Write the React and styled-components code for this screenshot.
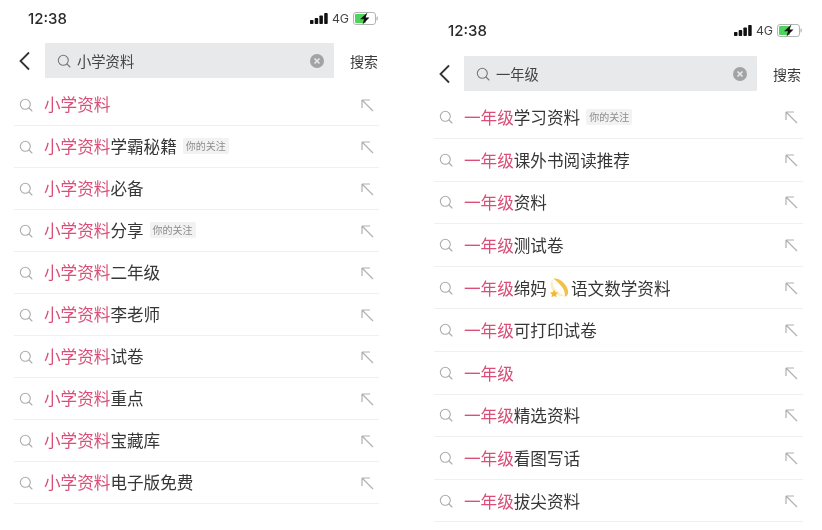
import React from "react";
import styled, { createGlobalStyle } from "styled-components";

const GlobalStyle = createGlobalStyle`
  html, body {
    margin: 0;
    padding: 0;
    background: #fff;
  }
`;

const Page = styled.div`
  box-sizing: border-box;
  width: 822px;
  height: 530px;
  padding: 0 19px 0 14px;
  display: flex;
  justify-content: space-between;
  overflow: hidden;
  background: #fff;
  font-family: "Noto Sans CJK SC", "Liberation Sans", sans-serif;
  filter: blur(0.45px);
`;

const Panel = styled.div`
  width: ${props => props.$width}px;
  padding-top: ${props => props.$top}px;
`;

const StatusBar = styled.div`
  height: 20px;
  padding: 0 1px 0 14px;
  display: flex;
  align-items: center;
  justify-content: space-between;
`;

const Time = styled.div`
  font-family: Inter, "Liberation Sans", sans-serif;
  font-size: 15px;
  font-weight: 500;
  color: #2a2a2a;
`;

const StatusIcons = styled.div`
  display: flex;
  align-items: center;
  gap: 4px;
`;

const Network = styled.span`
  font-family: Inter, "Liberation Sans", sans-serif;
  font-size: 12.3px;
  color: #444;
`;

const SearchRow = styled.div`
  margin-top: ${props => props.$gap}px;
  padding-right: ${props => props.$trail}px;
  height: 35px;
  display: flex;
  align-items: center;
`;

const BackButton = styled.div`
  width: ${props => props.$width}px;
  padding-left: 4px;
  box-sizing: border-box;
  display: flex;
  align-items: center;
`;

const SearchBox = styled.div`
  flex: 1;
  height: 35px;
  box-sizing: border-box;
  padding: 0 10px 0 12px;
  display: flex;
  align-items: center;
  gap: 6px;
  background: #e8e9ea;
  border-radius: 1px;
`;

const SearchText = styled.div`
  flex: 1;
  font-size: 14.3px;
  line-height: 20px;
  color: #444;
`;

const SearchLabel = styled.div`
  margin-left: 16px;
  width: 29px;
  font-size: 14px;
  white-space: nowrap;
  color: #3a3a3a;
`;

const List = styled.div`
  margin-top: ${props => props.$gap}px;
`;

const Row = styled.div`
  box-sizing: border-box;
  height: ${props => props.$height}px;
  padding: 0 5px;
  display: flex;
  align-items: center;
  border-bottom: 1px solid #f0f0f0;
`;

const Label = styled.div`
  flex: 1;
  margin-left: 11px;
  padding-bottom: ${props => props.$lift}px;
  display: flex;
  align-items: center;
  font-size: 16.6px;
  line-height: 24px;
  white-space: nowrap;
  color: #363636;
`;

const Keyword = styled.span`
  color: #d94f78;
`;

const Tag = styled.span`
  margin-left: 6px;
  padding: 0 3px;
  height: 16px;
  line-height: 16px;
  font-size: 10px;
  color: #8d8d8d;
  background: #f2f2f2;
  border-radius: 2px;
`;

const Glass = ({ color, size = 14 }) => (
  <svg width={size} height={size} viewBox="0 0 14 14" fill="none" style={{ flexShrink: 0 }}>
    <circle cx="6.3" cy="6.3" r="5" stroke={color} strokeWidth="1.1" />
    <path d="M10 10l3 3" stroke={color} strokeWidth="1.1" strokeLinecap="round" />
  </svg>
);

const ArrowUpLeft = () => (
  <svg width="14" height="14" viewBox="0 0 14 14" fill="none" style={{ flexShrink: 0 }}>
    <path d="M2 2L13 13M2 2H10M2 2V10" stroke="#b0b0b0" strokeWidth="1.2" />
  </svg>
);

const Chevron = () => (
  <svg width="13" height="20" viewBox="0 0 13 20" fill="none">
    <path d="M11 1.5L2.5 10l8.5 8.5" stroke="#333" strokeWidth="1.8" />
  </svg>
);

const ClearIcon = () => (
  <svg width="14" height="14" viewBox="0 0 14 14" style={{ flexShrink: 0 }}>
    <circle cx="7" cy="7" r="7" fill="#a3a3a5" />
    <path d="M4.5 4.5l5 5M9.5 4.5l-5 5" stroke="#e8e9ea" strokeWidth="1.6" />
  </svg>
);

const Signal = () => (
  <svg width="18" height="11" viewBox="0 0 18 11">
    <rect x="0" y="7" width="3.5" height="4" rx="0.8" fill="#111" />
    <rect x="4.7" y="5" width="3.5" height="6" rx="0.8" fill="#111" />
    <rect x="9.4" y="2.5" width="3.5" height="8.5" rx="0.8" fill="#111" />
    <rect x="14.2" y="0" width="3.5" height="11" rx="0.8" fill="#111" />
  </svg>
);

const Battery = () => (
  <svg width="25" height="13" viewBox="0 0 25 13">
    <rect x="0.5" y="0.5" width="22" height="12" rx="2.5" fill="none" stroke="#b5b5b5" />
    <rect x="2" y="2" width="11" height="9" rx="1" fill="#4fd35e" />
    <rect x="23.4" y="4.5" width="1.4" height="4" rx="0.7" fill="#bbb" />
    <path d="M14.5 0.5L7 7.2h4L9.5 12.5l7-6.9h-4z" fill="#111" />
  </svg>
);

const ShootingStar = () => (
  <svg width="22" height="22" viewBox="0 0 20 20" style={{ margin: "0 1px", flexShrink: 0 }}>
    <path d="M5 1.5C9.5 0.5 16 5 18 11.5c1 3.8-.4 5.8-3 6.5 1.2-3-.6-7.5-3.8-10.8C9.3 5 7 3 5 1.5z" fill="#f1c14c" />
    <path d="M5 1.5C2.8 5 5.5 11 10.5 14.6c1.6 1.1 3 1.7 4.5 2.2-3.8 1.8-8.2-.5-10.8-4.3C1.8 9 1.6 3.5 5 1.5z" fill="#fbeec4" />
    <path d="M5.5 11.5l1.200 2.300 2.500.4-1.800 1.700.4 2.600-2.300-1.200-2.300 1.200.4-2.600L1.800 14.200l2.500-.4z" fill="#efb938" />
  </svg>
);

const Phone = ({ width, top, backWidth, rowHeight, searchGap, listGap, trail, lift, query, items }) => (
  <Panel $width={width} $top={top}>
    <StatusBar>
      <Time>12:38</Time>
      <StatusIcons>
        <Signal />
        <Network>4G</Network>
        <Battery />
      </StatusIcons>
    </StatusBar>
    <SearchRow $gap={searchGap} $trail={trail}>
      <BackButton $width={backWidth}>
        <Chevron />
      </BackButton>
      <SearchBox>
        <Glass color="#777" />
        <SearchText>{query}</SearchText>
        <ClearIcon />
      </SearchBox>
      <SearchLabel>搜索</SearchLabel>
    </SearchRow>
    <List $gap={listGap}>
      {items.map((item, i) => (
        <Row key={i} $height={rowHeight}>
          <Glass color="#ababab" />
          <Label $lift={lift}>
            <Keyword>{query}</Keyword>
            {item.text}
            {item.star && <ShootingStar />}
            {item.after}
            {item.tag && <Tag>你的关注</Tag>}
          </Label>
          <ArrowUpLeft />
        </Row>
      ))}
    </List>
  </Panel>
);

const leftItems = [
  { text: "" },
  { text: "学霸秘籍", tag: true },
  { text: "必备" },
  { text: "分享", tag: true },
  { text: "二年级" },
  { text: "李老师" },
  { text: "试卷" },
  { text: "重点" },
  { text: "宝藏库" },
  { text: "电子版免费" }
];

const rightItems = [
  { text: "学习资料", tag: true },
  { text: "课外书阅读推荐" },
  { text: "资料" },
  { text: "测试卷" },
  { text: "绵妈", star: true, after: "语文数学资料" },
  { text: "可打印试卷" },
  { text: "" },
  { text: "精选资料" },
  { text: "看图写话" },
  { text: "拔尖资料" }
];

export default function App() {
  return (
    <>
      <GlobalStyle />
      <Page>
        <Phone width={365} top={8} backWidth={31} rowHeight={42} searchGap={15} listGap={6} trail={0} lift={2} query="小学资料" items={leftItems} />
        <Phone width={369} top={20} backWidth={30} rowHeight={42.6} searchGap={16} listGap={5.4} trail={1} lift={0} query="一年级" items={rightItems} />
      </Page>
    </>
  );
}
